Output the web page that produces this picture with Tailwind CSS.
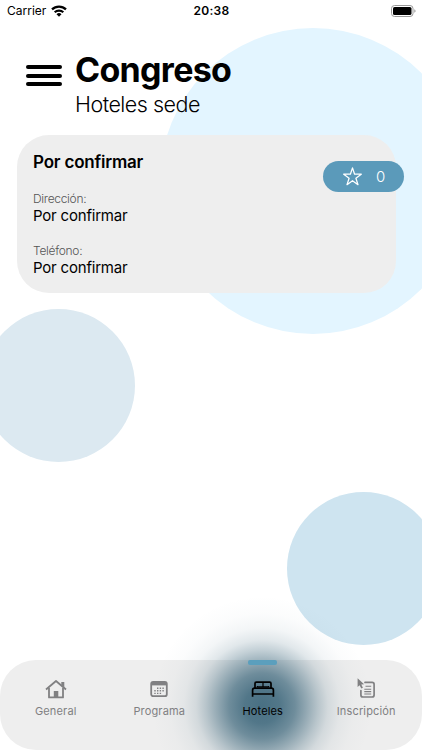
<!DOCTYPE html>
<html lang="es">
<head>
    <meta charset="UTF-8">
    <meta name="viewport" content="width=device-width, initial-scale=1.0">
    <title>Congreso | Hoteles sede</title>
    <script src="https://cdn.jsdelivr.net/npm/@tailwindcss/browser@4"></script>
</head>
<body class="bg-white font-['Inter',sans-serif] text-black">
    <div class="relative flex h-[750px] w-[422px] flex-col overflow-hidden">
        <!-- Background circles -->
        <div class="absolute left-[160px] top-[28px] size-[306px] rounded-full bg-[#e3f5ff]"></div>
        <div class="absolute left-[-18px] top-[309px] size-[153px] rounded-full bg-[#dce9f1]"></div>
        <div class="absolute left-[287px] top-[492px] size-[153px] rounded-full bg-[#cee4f0]"></div>

        <!-- Status bar -->
        <div class="relative grid h-[22px] grid-cols-3 items-center pl-[7px] pr-[6px]">
            <div class="flex items-center gap-[5px]">
                <span class="text-[12px] leading-none">Carrier</span>
                <svg class="-mt-px h-[12px] w-[16px]" viewBox="0 0 16 12" fill="none" stroke="#000" stroke-width="2.2">
                    <path d="M1 4.4a10 10 0 0 1 14 0M3.7 7.3a6.2 6.2 0 0 1 8.6 0"/>
                    <path d="M8 11.8 5.5 9.2a3.6 3.6 0 0 1 5 0z" fill="#000" stroke="none"/>
                </svg>
            </div>
            <span class="text-center text-[12px] font-semibold leading-none tracking-[0.3px]">20:38</span>
            <svg class="-mt-px h-[12px] w-[25px] justify-self-end" viewBox="0 0 25 12">
                <rect x=".5" y=".5" width="21.5" height="11" rx="3" fill="#fff" stroke="#999"/>
                <rect x="2" y="2" width="18.5" height="8" rx="1.6"/>
                <path d="M23.3 4.2v3.6q1.3-.6 1.3-1.8t-1.3-1.8" fill="#999"/>
            </svg>
        </div>

        <!-- Header -->
        <header class="relative flex pl-[26px] pt-[28px]">
            <div class="mt-[15px] flex h-[21px] w-[36px] flex-col justify-between">
                <span class="h-[4px] rounded-full bg-black"></span>
                <span class="h-[4px] rounded-full bg-black"></span>
                <span class="h-[4px] rounded-full bg-black"></span>
            </div>
            <div class="ml-[13px]">
                <h1 class="text-[34px] font-bold leading-[40px] tracking-[-0.7px]">Congreso</h1>
                <p class="mt-[1px] text-[21.5px] font-light leading-[26px] tracking-[-0.5px]">Hoteles sede</p>
            </div>
        </header>

        <!-- Hotel card -->
        <section class="relative ml-[17px] mt-[18px] h-[158px] w-[379px] rounded-[32px] bg-[#eee] pl-[16px] pt-[16px]">
            <h2 class="text-[17px] font-semibold leading-[22px] tracking-[-0.2px]">Por confirmar</h2>
            <p class="mt-[18px] text-[12px] font-light leading-[16px] tracking-[-0.3px] text-[#555]">Dirección:</p>
            <p class="text-[15px] leading-[18px] tracking-[-0.2px]">Por confirmar</p>
            <p class="mt-[18px] text-[12px] font-light leading-[16px] tracking-[-0.3px] text-[#555]">Teléfono:</p>
            <p class="text-[15px] leading-[18px] tracking-[-0.2px]">Por confirmar</p>
            <div class="absolute right-[-8px] top-[26px] flex h-[31px] w-[81px] items-center rounded-full bg-[#5b9aba] pl-[20px] text-white">
                <svg class="size-[19px]" viewBox="0 0 19 19" fill="none" stroke="currentColor" stroke-width="1.25" stroke-linejoin="round">
                    <path d="M9.5.9 11.6 7.2h6.7l-5.4 4 2.1 6.5-5.5-4-5.5 4 2.1-6.5-5.4-4h6.7z"/>
                </svg>
                <span class="ml-[14px] mt-px text-[15px] font-light">0</span>
            </div>
        </section>

        <!-- Tab bar -->
        <nav class="relative mt-auto grid h-[90px] grid-cols-4 rounded-[36px] bg-[#eee] px-[4px] text-[11px] leading-[14px] tracking-[0.15px] text-[#808082]">
            <!-- Glow behind the active tab -->
            <div class="absolute left-[152px] top-[-64px] h-[220px] w-[220px] bg-[radial-gradient(circle_closest-side,#416a7ef4_0%,#416a7ee6_16%,#416a7ebc_30%,#416a7e84_41%,#416a7e50_51%,#416a7e28_60%,#416a7e10_71%,#416a7e05_84%,transparent_100%)]"></div>
            <div class="absolute left-[248px] top-0 h-[5px] w-[29px] rounded-[2px] bg-[#5b9fbd]"></div>
            <div class="relative flex flex-col items-center pt-[18px]">
                <svg class="h-[22px] w-[24px]" viewBox="0 0 24 22" fill="none" stroke="currentColor" stroke-width="1.8">
                    <path d="M2 11.5 12 3l10 8.5" stroke-linejoin="round"/>
                    <path d="M5 10v9.4h14V10" stroke-linejoin="round"/>
                    <path d="M17.3 4h3v5.4l-3-2.5zM9.8 13h4.5v6.2H9.8z" fill="currentColor" stroke="none"/>
                </svg>
                <span class="mt-[4px]">General</span>
            </div>
            <div class="relative flex flex-col items-center pt-[18px]">
                <svg class="h-[22px] w-[24px]" viewBox="0 0 24 22" fill="none" stroke="currentColor" stroke-width="1.8">
                    <rect x="4.2" y="3.8" width="15.6" height="14.4" rx="2"/>
                    <path d="M4 4h16v3.4H4z" fill="currentColor" stroke="none"/>
                    <path d="M10 10.2h7.5M7.3 12.8h10.2M7.3 15.4H15" stroke-width="1.4" stroke-dasharray="1.4 1.3"/>
                </svg>
                <span class="mt-[4px]">Programa</span>
            </div>
            <div class="relative flex flex-col items-center pt-[18px] text-black">
                <svg class="h-[22px] w-[24px]" viewBox="0 0 24 22" fill="none" stroke="currentColor" stroke-width="1.7" stroke-linejoin="round">
                    <path d="M4 10.2V5.5Q4 4.2 5.3 4.2h13.4Q20 4.2 20 5.5v4.7"/>
                    <path d="M1.6 18.7v-6.5q0-2 2-2h16.8q2 0 2 2v6.5M1.6 16h20.8"/>
                    <path d="M12 4.5v3.4q0 1-1 1H7.2q-1 0-1-1M12 7.9q0 1 1 1h3.8q1 0 1-1" stroke-width="1.2"/>
                </svg>
                <span class="mt-[4px]">Hoteles</span>
            </div>
            <div class="relative flex flex-col items-center pt-[18px]">
                <svg class="h-[22px] w-[24px]" viewBox="0 0 24 22" fill="none" stroke="currentColor" stroke-width="1.7">
                    <path d="M11 4.4h7.1q2 0 2 2v10.6q0 2-2 2H8.9q-2 0-2-2V12.5" stroke-linecap="round"/>
                    <path d="M11.5 8.2h5.7M10.3 11.2h6.9M10.3 13.6h6.9M10.3 16h6.9" stroke-width="1.1"/>
                    <path d="M3.6.3v8.6l2-1.6 1.7 3.3 1.6-.8-1.6-3.2 2.8-.4z" fill="currentColor" stroke="none"/>
                </svg>
                <span class="mt-[4px]">Inscripción</span>
            </div>
        </nav>
    </div>
</body>
</html>
